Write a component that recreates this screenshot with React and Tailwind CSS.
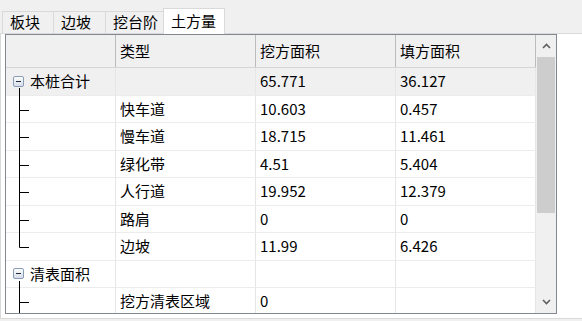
import React from 'react';

const FONT = { fontFamily: '"Noto Sans CJK SC", "Noto Sans", sans-serif' };

const rows = [
  { kind: 'parent', name: '本桩合计', cut: '65.771', fill: '36.127', shaded: true },
  { kind: 'child', type: '快车道', cut: '10.603', fill: '0.457' },
  { kind: 'child', type: '慢车道', cut: '18.715', fill: '11.461' },
  { kind: 'child', type: '绿化带', cut: '4.51', fill: '5.404' },
  { kind: 'child', type: '人行道', cut: '19.952', fill: '12.379' },
  { kind: 'child', type: '路肩', cut: '0', fill: '0' },
  { kind: 'last', type: '边坡', cut: '11.99', fill: '6.426' },
  { kind: 'parent', name: '清表面积', cut: '', fill: '' },
  { kind: 'child', type: '挖方清表区域', cut: '0', fill: '' },
];

const Expander = () => (
  <svg width="11" height="11" viewBox="0 0 11 11" className="shrink-0">
    <defs>
      <linearGradient id="exg" x1="0" y1="0" x2="0" y2="1">
        <stop offset="0" stopColor="#ffffff" />
        <stop offset="1" stopColor="#d4dbe6" />
      </linearGradient>
    </defs>
    <rect x="0.5" y="0.5" width="10" height="10" rx="1.5" fill="url(#exg)" stroke="#8a9bb4" />
    <path d="M3 5.5h5" stroke="#1f2a3a" strokeWidth="1" />
  </svg>
);

const TreeLines = ({ kind }) => (
  <svg width="24" height="28" viewBox="0 0 24 28" className="absolute left-0 top-0">
    {kind === 'last' ? (
      <path d="M13.5 0V14.5H23" stroke="#000" fill="none" />
    ) : (
      <>
        <path d="M13.5 0V28" stroke="#000" />
        <path d="M13.5 14.5H23" stroke="#000" />
      </>
    )}
  </svg>
);

const Tab = ({ label, active, w }) =>
  active ? (
    <div className={`relative z-10 -mb-px h-[26px] ${w} flex items-center pl-[7px] whitespace-nowrap bg-white border border-b-0 border-[#d9d9d9] text-[15px] text-black`}>
      {label}
    </div>
  ) : (
    <div className={`h-[22px] ${w} flex items-center pl-[7px] whitespace-nowrap border border-r-0 border-b-0 border-[#d9d9d9] text-[15px] text-black`}>
      {label}
    </div>
  );

const Chevron = ({ down }) => (
  <svg width="9" height="6" viewBox="0 0 9 6">
    <path d={down ? 'M1 1l3.5 3.5L8 1' : 'M1 5l3.5-3.5L8 5'} stroke="#606060" strokeWidth="1.6" fill="none" />
  </svg>
);

export default function App() {
  return (
    <div className="w-[582px] h-[321px] bg-[#f0f0f0] overflow-hidden" style={FONT}>
      <div className="h-[33px] flex items-end pl-[2px]">
        <Tab label="板块" w="w-[51px]" />
        <Tab label="边坡" w="w-[52px]" />
        <Tab label="挖台阶" w="w-[58px]" />
        <Tab label="土方量" w="w-[62px]" active />
      </div>

      <div className="h-[286px] bg-white border-t border-l border-b border-[#d9d9d9] pl-[4px]">
        <div className="w-[552px] h-[280px] border border-[#828790] flex bg-white">
          <div className="w-[530px] h-full overflow-hidden">
            {/* header */}
            <div className="flex h-[33px] bg-[#f0f0f0] border-b border-[#d5d5d5] text-[15px] text-black">
              <div className="w-[110px] border-r border-[#bcbcbc]" />
              <div className="w-[140px] border-r border-[#bcbcbc] pl-[4px] flex items-center">类型</div>
              <div className="w-[140px] border-r border-[#bcbcbc] pl-[4px] flex items-center">挖方面积</div>
              <div className="w-[140px] border-r border-[#bcbcbc] pl-[4px] flex items-center">填方面积</div>
            </div>
            {rows.map((r, i) => (
              <div
                key={i}
                className={`flex h-[27.5px] border-b border-[#ececec] text-[15px] text-black ${r.shaded ? 'bg-[#f0f0f0]' : 'bg-white'}`}
              >
                <div className="relative w-[110px] border-r border-[#e6e6e6] flex items-center">
                  {r.kind === 'parent' ? (
                    <>
                      <div className="pl-[7px] pr-[6px] flex items-center">
                        <Expander />
                      </div>
                      <span>{r.name}</span>
                      <svg width="20" height="28" className="absolute left-0 top-0">
                        <path d="M13.5 20V28" stroke="#000" />
                      </svg>
                    </>
                  ) : (
                    <TreeLines kind={r.kind} />
                  )}
                </div>
                <div className="w-[140px] border-r border-[#e6e6e6] pl-[4px] flex items-center">{r.type || ''}</div>
                <div className="w-[140px] border-r border-[#e6e6e6] pl-[4px] flex items-center">{r.cut}</div>
                <div className="w-[140px] border-r border-[#e6e6e6] pl-[4px] flex items-center">{r.fill}</div>
              </div>
            ))}
          </div>
          {/* scrollbar */}
          <div className="w-[20px] h-full bg-[#f0f0f0] flex flex-col">
            <div className="h-[22px] flex items-center justify-center"><Chevron /></div>
            <div className="mx-[1px] h-[156px] bg-[#cdcdcd]" />
            <div className="flex-1" />
            <div className="h-[22px] flex items-center justify-center"><Chevron down /></div>
          </div>
        </div>
      </div>
    </div>
  );
}
